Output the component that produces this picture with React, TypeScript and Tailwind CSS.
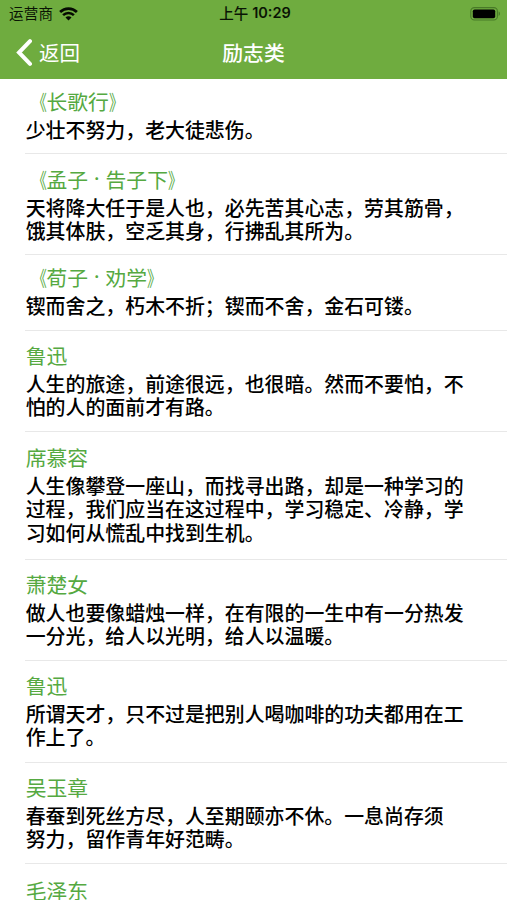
import clsx from 'clsx';

type Quote = {
  author: string;
  isWork?: boolean;
  lines: string[];
  height: string;
  padding: string;
};

const quotes: Quote[] = [
  {
    author: '长歌行',
    isWork: true,
    lines: ['少壮不努力，老大徒悲伤。'],
    height: 'h-[75px]',
    padding: 'pt-[7px]',
  },
  {
    author: '孟子·告子下',
    isWork: true,
    lines: ['天将降大任于是人也，必先苦其心志，劳其筋骨，', '饿其体肤，空乏其身，行拂乱其所为。'],
    height: 'h-[101px]',
    padding: 'pt-[10px]',
  },
  {
    author: '荀子·劝学',
    isWork: true,
    lines: ['锲而舍之，朽木不折；锲而不舍，金石可镂。'],
    height: 'h-[76px]',
    padding: 'pt-[7px]',
  },
  {
    author: '鲁迅',
    lines: ['人生的旅途，前途很远，也很暗。然而不要怕，不', '怕的人的面前才有路。'],
    height: 'h-[101px]',
    padding: 'pt-[9px]',
  },
  {
    author: '席慕容',
    lines: [
      '人生像攀登一座山，而找寻出路，却是一种学习的',
      '过程，我们应当在这过程中，学习稳定、冷静，学',
      '习如何从慌乱中找到生机。',
    ],
    height: 'h-[128px]',
    padding: 'pt-[10px]',
  },
  {
    author: '萧楚女',
    lines: ['做人也要像蜡烛一样，在有限的一生中有一分热发', '一分光，给人以光明，给人以温暖。'],
    height: 'h-[101px]',
    padding: 'pt-[9px]',
  },
  {
    author: '鲁迅',
    lines: ['所谓天才，只不过是把别人喝咖啡的功夫都用在工', '作上了。'],
    height: 'h-[102px]',
    padding: 'pt-[9px]',
  },
  {
    author: '吴玉章',
    lines: ['春蚕到死丝方尽，人至期颐亦不休。一息尚存须', '努力，留作青年好范畴。'],
    height: 'h-[101px]',
    padding: 'pt-[9px]',
  },
  {
    author: '毛泽东',
    lines: [],
    height: 'h-[101px]',
    padding: 'pt-[11px]',
  },
];

function WifiIcon() {
  return (
    <svg className="h-[14px] w-[19px]" viewBox="0 0 19 14" fill="none" stroke="#050a02">
      <path d="M1.1 5a11.9 11.9 0 0 1 16.8 0" strokeWidth="2.7" />
      <path d="M4.1 8.2a7.6 7.6 0 0 1 10.8 0" strokeWidth="2.5" />
      <path d="M9.5 13.6 6.5 10.6a4.2 4.2 0 0 1 6 0Z" fill="#050a02" stroke="none" />
    </svg>
  );
}

function BatteryIcon() {
  return (
    <svg className="h-[14px] w-[31px]" viewBox="0 0 31 14">
      <rect
        x="0.8"
        y="0.6"
        width="26.6"
        height="12.4"
        rx="3.6"
        fill="none"
        stroke="#487a28"
        strokeWidth="1.1"
      />
      <rect x="2.8" y="2.4" width="22.4" height="8.8" rx="1.8" fill="#000" />
      <path d="M28.6 4.6c1.8.6 1.8 3.8 0 4.4Z" fill="#487a28" />
    </svg>
  );
}

function StatusBar() {
  return (
    <div className="grid h-[27px] grid-cols-3 items-center pr-[6px] pl-[9px] text-[#0a1404]">
      <div className="flex items-center gap-[6px]">
        <span className="text-[14.5px] leading-none tracking-[0.3px]">运营商</span>
        <WifiIcon />
      </div>
      <div className="flex items-center justify-center gap-[4px] text-[14.5px] leading-none font-medium">
        <span>上午</span>
        <span className="font-['Inter'] font-semibold">10:29</span>
      </div>
      <div className="flex justify-end">
        <BatteryIcon />
      </div>
    </div>
  );
}

function NavBar() {
  return (
    <div className="grid h-[52px] grid-cols-3 items-center text-white">
      <button className="flex items-center gap-[7px] pl-4 pb-[2px]">
        <svg className="h-[27px] w-4" viewBox="0 0 16 27" fill="none" stroke="currentColor">
          <path d="M14 2.2 3 13.5l11 11.3" strokeWidth="4" strokeLinecap="round" />
        </svg>
        <span className="text-[20.5px] leading-none">返回</span>
      </button>
      <h1 className="pb-[2px] text-center text-[20.8px] leading-none font-medium">励志类</h1>
    </div>
  );
}

function QuoteTitle({ quote }: { quote: Quote }) {
  const parts = quote.author.split('·');
  return (
    <h2 className="flex text-[20.8px] leading-[30px] text-[#55a941]">
      {quote.isWork && <span className="origin-right scale-x-[0.7]">《</span>}
      <span>{parts[0]}</span>
      {parts[1] && (
        <>
          <span className="w-[17.5px] text-center font-['Inter']">·</span>
          <span>{parts[1]}</span>
        </>
      )}
      {quote.isWork && <span className="origin-left scale-x-[0.7]">》</span>}
    </h2>
  );
}

function QuoteRow({ quote }: { quote: Quote }) {
  return (
    <li
      className={clsx(
        'ml-[25px] shrink-0 border-b border-[#e8e8e8] pl-[0.7px] whitespace-nowrap',
        quote.height,
        quote.padding,
      )}
    >
      <QuoteTitle quote={quote} />
      <div className="pt-[2px] text-[19.92px] leading-[23.4px] font-medium text-black">
        {quote.lines.map((line) => (
          <p key={line}>{line}</p>
        ))}
      </div>
    </li>
  );
}

export default function App() {
  return (
    <div className="flex h-[900px] w-[507px] flex-col overflow-hidden bg-white font-['Noto_Sans_CJK_SC',sans-serif]">
      <header className="h-[79px] shrink-0 bg-[#6fac3f]">
        <StatusBar />
        <NavBar />
      </header>
      <ul className="flex flex-1 flex-col overflow-hidden">
        {quotes.map((quote, index) => (
          <QuoteRow key={index} quote={quote} />
        ))}
      </ul>
    </div>
  );
}
